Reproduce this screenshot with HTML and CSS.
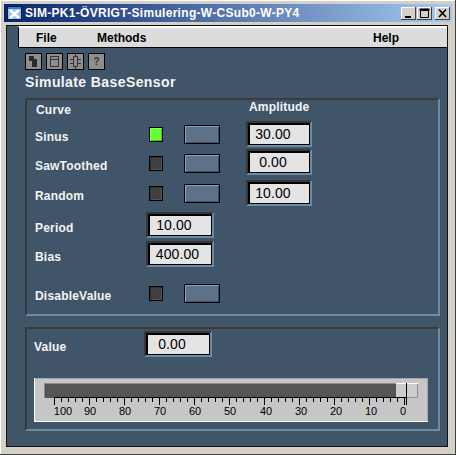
FILE: index.html
```html
<!DOCTYPE html>
<html lang="sv">

<head>
    <meta charset="UTF-8">
    <title>SIM-PK1-ÖVRIGT-Simulering-W-CSub0-W-PY4</title>
    <link rel="stylesheet" href="styles.css">
</head>

<body>
    <div class="window">
        <div class="titlebar">
            <svg class="app-icon" width="15" height="14" viewBox="0 0 15 14">
                <rect width="15" height="14" fill="#0a1a5c" />
                <rect x="1" y="1" width="13" height="2" fill="#2f7fd0" />
                <rect x="1" y="3" width="13" height="10" fill="#9fc4d8" />
                <path d="M3 4l9 8M12 4l-9 8" stroke="#fff" stroke-width="2.4" fill="none" />
            </svg>
            <span class="title-text">SIM-PK1-ÖVRIGT-Simulering-W-CSub0-W-PY4</span>
            <div class="win-buttons">
                <div class="win-btn">
                    <svg width="15" height="13" viewBox="0 0 15 13"><rect x="4" y="9" width="6" height="2" fill="#000" /></svg>
                </div>
                <div class="win-btn">
                    <svg width="15" height="13" viewBox="0 0 15 13"><path d="M3.5 2.5h8v8h-8zM3 2h9v1.500H3z" stroke="#000" fill="none" /></svg>
                </div>
                <div class="win-btn win-close">
                    <svg width="15" height="13" viewBox="0 0 15 13"><path d="M4 2.500l7 7.500M11 2.500l-7 7.500" stroke="#000" stroke-width="1.600" fill="none" /></svg>
                </div>
            </div>
        </div>

        <div class="panel">
            <div class="menubar">
                <span class="menu-file">File</span>
                <span class="menu-methods">Methods</span>
                <span class="menu-help">Help</span>
            </div>

            <div class="toolbar">
                <div class="tool-btn">
                    <svg width="15" height="15" viewBox="0 0 15 15"><path d="M3 2h5v3h3v8H6V7H3z" fill="#2a2a2a" /></svg>
                </div>
                <div class="tool-btn">
                    <svg width="15" height="15" viewBox="0 0 15 15"><path d="M3.500 2.500h8v10h-8zM3.500 5.500h8" stroke="#333" fill="none" /></svg>
                </div>
                <div class="tool-btn">
                    <svg width="15" height="15" viewBox="0 0 15 15"><path d="M5.500 2.500h4v10h-4zM2 5.500h3.500M2 9.500h3.500M9.500 5.500H13M9.500 9.500H13M7.500 0v2.500M7.500 12.500V15" stroke="#333" fill="none" /></svg>
                </div>
                <div class="tool-btn tool-help">?</div>
            </div>

            <div class="heading">Simulate BaseSensor</div>

            <div class="group group-curve">
                <div class="row row-head">
                    <span class="head-curve">Curve</span>
                    <span class="head-amplitude">Amplitude</span>
                </div>

                <div class="row row-sinus">
                    <span class="label">Sinus</span>
                    <span class="led led-on"></span>
                    <span class="push-btn"></span>
                    <span class="field">30.00</span>
                </div>
                <div class="row row-saw">
                    <span class="label">SawToothed</span>
                    <span class="led"></span>
                    <span class="push-btn"></span>
                    <span class="field">0.00</span>
                </div>
                <div class="row row-random">
                    <span class="label">Random</span>
                    <span class="led"></span>
                    <span class="push-btn"></span>
                    <span class="field">10.00</span>
                </div>
                <div class="row row-period">
                    <span class="label">Period</span>
                    <span class="field field-long">10.00</span>
                </div>
                <div class="row row-bias">
                    <span class="label">Bias</span>
                    <span class="field field-long field-wide-value">400.00</span>
                </div>
                <div class="row row-disable">
                    <span class="label">DisableValue</span>
                    <span class="led"></span>
                    <span class="push-btn"></span>
                </div>
            </div>

            <div class="group group-value">
                <div class="row row-value">
                    <span class="label">Value</span>
                    <span class="field field-long">0.00</span>
                </div>

                <svg class="scale" width="394" height="44" viewBox="0 0 394 44">
                    <defs>
                        <pattern id="minorTicks" x="20" y="0" width="7" height="44" patternUnits="userSpaceOnUse">
                            <rect width="1" height="44" fill="#000" />
                        </pattern>
                        <pattern id="majorTicks" x="20" y="0" width="35" height="44" patternUnits="userSpaceOnUse">
                            <rect width="1" height="44" fill="#000" />
                        </pattern>
                    </defs>
                    <rect width="394" height="44" fill="#c6c6c6" />
                    <rect width="394" height="1" fill="#a6a6a6" />
                    <rect x="393" width="1" height="44" fill="#a6a6a6" />
                    <rect width="1" height="44" fill="#fff" />
                    <rect y="43" width="394" height="1" fill="#fff" />
                    <rect x="10" y="5" width="352" height="15" fill="#8a8a8a" />
                    <rect x="11" y="6" width="351" height="14" fill="#555" />
                    <rect x="362" y="5" width="22" height="15" fill="#8f8f8f" />
                    <rect x="362" y="6" width="21" height="13" fill="#cdcdcd" />
                    <rect x="362" y="5" width="22" height="1" fill="#fff" />
                    <rect x="20" y="19" width="352" height="1" fill="#000" />
                    <rect x="20" y="20" width="351" height="4" fill="url(#minorTicks)" />
                    <rect x="20" y="20" width="351" height="7" fill="url(#majorTicks)" />
                    <rect x="372" y="5" width="1" height="22" fill="#000" />
                    <g class="scale-labels">
                        <text x="29" y="37">100</text>
                        <text x="56" y="37">90</text>
                        <text x="91" y="37">80</text>
                        <text x="126" y="37">70</text>
                        <text x="161" y="37">60</text>
                        <text x="196" y="37">50</text>
                        <text x="232" y="37">40</text>
                        <text x="267" y="37">30</text>
                        <text x="302" y="37">20</text>
                        <text x="337" y="37">10</text>
                        <text x="369" y="37">0</text>
                    </g>
                </svg>
            </div>
        </div>
    </div>
</body>

</html>
```

FILE: styles.css
```css
body {
    margin: 0;
    background-color: #d4d0c8;
    font-family: 'Liberation Sans', Arial, sans-serif;
}

.window {
    box-sizing: border-box;
    width: 456px;
    height: 455px;
    padding: 3px;
    background-color: #d4d0c8;
    border-right: 1px solid #404040;
    border-bottom: 1px solid #404040;
    box-shadow: inset 1px 1px 0 #fff;
}

/* title bar */
.titlebar {
    display: flex;
    align-items: center;
    height: 18px;
    margin: 1px 0 0 1px;
    padding: 0 2px 0 3px;
    background: linear-gradient(to right, #0a246a, #a6caf0);
}

.app-icon {
    flex: none;
}

.title-text {
    margin-left: 3px;
    color: #fff;
    font-size: 12px;
    font-weight: bold;
    letter-spacing: 0.3px;
    white-space: nowrap;
}

.win-buttons {
    display: flex;
    margin-left: auto;
}

.win-btn {
    box-sizing: border-box;
    width: 15px;
    height: 13px;
    margin-left: 1px;
    background-color: #d4d0c8;
    box-shadow: inset -1px -1px 0 #404040, inset 1px 1px 0 #fff;
}

.win-btn svg {
    display: block;
}

.win-close {
    margin-left: 3px;
}

/* main panel */
.panel {
    box-sizing: border-box;
    width: 442px;
    height: 422px;
    margin: 3px 0 0 3px;
    border: 1px solid #111;
    background-color: #3f5468;
    background-image: repeating-conic-gradient(#3d5165 0 25%, #45596e 0 50%);
    background-size: 2px 2px;
}

.menubar {
    position: relative;
    box-sizing: border-box;
    height: 22px;
    margin-left: 11px;
    border-left: 1px solid #000;
    border-bottom: 1px solid #000;
    border-top: 2px solid #fff;
    background-color: #dcdcdc;
    font-size: 12px;
    font-weight: bold;
    line-height: 20px;
    color: #000;
}

.menubar span {
    position: absolute;
    top: 0;
}

.menu-file {
    left: 17px;
}

.menu-methods {
    left: 78px;
}

.menu-help {
    left: 354px;
}

.toolbar {
    display: flex;
    gap: 4px;
    margin: 5px 0 0 18px;
}

.tool-btn {
    box-sizing: border-box;
    width: 17px;
    height: 17px;
    border: 1px solid #000;
    background-color: #8e8e8e;
}

.tool-btn svg {
    display: block;
}

.tool-help {
    color: #333;
    font-size: 10px;
    font-weight: bold;
    line-height: 15px;
    text-align: center;
}

.heading {
    margin: 4px 0 0 18px;
    color: #f4f4f4;
    font-size: 14px;
    font-weight: bold;
    line-height: 16px;
    letter-spacing: 0.4px;
}

/* etched group boxes */
.group {
    box-sizing: border-box;
    width: 415px;
    margin-left: 18px;
    border: 2px solid;
    border-color: #3a3a3c #6f8ba3 #6f8ba3 #3a3a3c;
}

.group-curve {
    height: 218px;
    margin-top: 8px;
}

.group-value {
    height: 104px;
    margin-top: 11px;
}

.row {
    display: grid;
    grid-template-columns: 111px 38px 62px 66px;
    align-items: start;
    padding-left: 8px;
}

.label,
.head-curve,
.head-amplitude {
    color: #f4f4f4;
    font-size: 12px;
    font-weight: bold;
    line-height: 16px;
    letter-spacing: 0.2px;
    white-space: nowrap;
}

.label {
    margin-top: 8px;
}

.row-head {
    height: 21px;
}

.head-curve {
    margin: 2px 0 0 1px;
}

.head-amplitude {
    grid-column: 4;
    margin: -1px 0 0 3px;
}

.row-sinus {
    height: 28px;
}

.row-saw {
    height: 31px;
}

.row-saw .label {
    margin-top: 9px;
}

.row-saw .led {
    margin-top: 7px;
}

.row-saw .push-btn {
    margin-top: 5px;
}

.row-random {
    height: 32px;
}

.row-period {
    height: 29px;
}

.row-bias {
    height: 43px;
}

.row-disable .label {
    margin-top: 4px;
}

.row-disable .led {
    margin-top: 2px;
}

.row-disable .push-btn {
    margin-top: 0;
}

.led {
    box-sizing: border-box;
    width: 14px;
    height: 15px;
    margin: 6px 0 0 3px;
    border: 1px solid #000;
    background-color: #404040;
    box-shadow: inset 1px 1px 0 #333, inset -1px -1px 0 #555;
}

.led-on {
    background-color: #66ff33;
    box-shadow: inset 1px 1px 0 #8cff5c, inset -1px -1px 0 #3cc41a;
}

.push-btn {
    box-sizing: border-box;
    width: 36px;
    height: 19px;
    margin-top: 4px;
    border: 1px solid #000;
    background-color: #5d7189;
    box-shadow: inset 1px 1px 0 #93a3b6, inset -1px -1px 0 #3f5064;
}

.field {
    box-sizing: border-box;
    width: 66px;
    height: 26px;
    border: 2px solid;
    border-color: #38383a #6f8ba3 #6f8ba3 #38383a;
    outline: 0;
    padding-right: 12px;
    background-color: #e4e4e4;
    box-shadow: inset 0 0 0 1px #000, inset 1px 1px 0 1px #000;
    color: #000;
    font-size: 14px;
    line-height: 22px;
    letter-spacing: 0.1px;
    text-align: center;
}

.field-long {
    grid-column: 2 / 4;
    width: 68px;
}

.field-wide-value {
    padding-right: 5px;
}

/* value group */
.row-value {
    height: 49px;
    grid-template-columns: 110px 68px;
    padding-left: 7px;
}

.row-value .field {
    grid-column: 2;
    margin-top: 2px;
}

.row-value .label {
    margin-top: 10px;
}

.scale {
    display: block;
    margin-left: 7px;
}

.scale-labels text {
    fill: #000;
    font-family: 'Liberation Sans', Arial, sans-serif;
    font-size: 11px;
    text-anchor: middle;
}
```
